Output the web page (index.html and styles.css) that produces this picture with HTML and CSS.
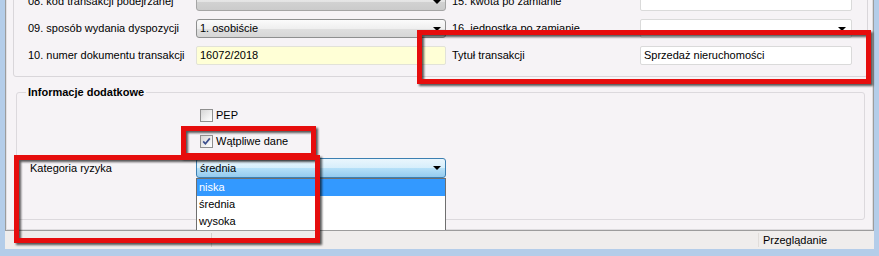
FILE: index.html
```html
<!DOCTYPE html>
<html>
<head>
	<meta charset="utf-8">
	<title>Transakcja</title>
	<link rel="stylesheet" href="styles.css">
</head>
<body>

<div class="screen">
	<div class="window">
		<div class="client">
			<div class="panel-top">
				<span class="lbl">08. kod transakcji podejrzanej</span>
				<span class="combo combo-off"><span class="arrow"></span></span>
				<span class="lbl lbl-r">15. kwota po zamianie</span>
				<span class="field"></span>

				<span class="lbl">09. sposób wydania dyspozycji</span>
				<span class="combo combo-gray">1. osobiście<span class="arrow"></span></span>
				<span class="lbl lbl-r">16. jednostka po zamianie</span>
				<span class="field field-combo"><span class="arrow"></span></span>

				<span class="lbl">10. numer dokumentu transakcji</span>
				<span class="field field-yellow">16072/2018</span>
				<span class="lbl lbl-r">Tytuł transakcji</span>
				<span class="field">Sprzedaż nieruchomości</span>
			</div>

			<fieldset class="extra">
				<legend>Informacje dodatkowe</legend>
				<label class="check"><span class="box"></span>PEP</label>
				<label class="check check-2"><span class="box"><svg width="11" height="11" viewBox="0 0 11 11"><path d="M2.2 5.4 L4.4 7.8 L8.8 2.4" fill="none" stroke="#3a4d8c" stroke-width="1.7"/></svg></span>Wątpliwe dane</label>
				<div class="risk">
					<span class="lbl risk-lbl">Kategoria ryzyka</span>
					<div class="combo combo-blue">średnia<span class="arrow"></span>
						<ul class="dropdown">
							<li class="sel">niska</li>
							<li>średnia</li>
							<li>wysoka</li>
						</ul>
					</div>
				</div>
			</fieldset>
		</div>
		<div class="status">
			<span class="st-cell st-first"></span>
			<span class="st-cell st-mid"></span>
			<span class="st-cell st-last">Przeglądanie<span class="grip"></span></span>
		</div>
	</div>

	<div class="mark mark-title"></div>
	<div class="mark mark-check"></div>
	<div class="mark mark-risk"></div>
</div>

</body>
</html>
```

FILE: styles.css
```css
html, body {
	margin: 0;
	padding: 0;
}
body {
	font-family: "Liberation Sans", Arial, sans-serif;
	font-size: 11px;
	line-height: 13px;
	color: #000;
}
.screen {
	position: relative;
	width: 879px;
	height: 256px;
	overflow: hidden;
	background: #b4cde9;
}
.window {
	display: flex;
	flex-direction: column;
	height: 249px;
	margin: 0 5px;
	background: #f6f3f6;
}
.client {
	flex: 1;
	overflow: hidden;
	border-style: solid;
	border-width: 0 1px 1px 1px;
	border-color: #9c9c9c;
	box-shadow: inset 1px 0 0 #e2e0e3, inset -1px -1px 0 #dedcdf;
}
.panel-top {
	display: grid;
	grid-template-columns: 168px 250px 194px 212px;
	grid-auto-rows: 19px;
	row-gap: 8px;
	align-items: center;
	margin: -20px 5px 0 7px;
	padding: 11px 0 11px 14px;
	border: 1px solid #d9d6da;
	border-radius: 3px;
}
.lbl {
	white-space: nowrap;
}
.lbl-r {
	padding-left: 6px;
}
.combo {
	position: relative;
	display: flex;
	align-items: center;
	box-sizing: border-box;
	height: 19px;
	padding: 0 4px 0 3px;
	border: 1px solid #8e8f8f;
	border-radius: 3px;
}
.combo .arrow {
	margin-left: auto;
}
.arrow {
	width: 0;
	height: 0;
	border-left: 4px solid transparent;
	border-right: 4px solid transparent;
	border-top: 4px solid #000;
}
.combo-off {
	background: linear-gradient(#f0f0f0, #e4e4e4 50%, #d2d2d2 51%, #cbcbcb);
	border-color: #a5a5a5;
}
.combo-gray {
	background: linear-gradient(#fbfbfb, #efefef 50%, #e0e0e0 51%, #d6d6d6);
}
.combo-blue {
	height: 20px;
	border-color: #3c7fb1;
	background: linear-gradient(#eaf6fd, #d6eefb 50%, #b6e0f8 51%, #94cbef);
}
.field {
	display: flex;
	align-items: center;
	box-sizing: border-box;
	height: 19px;
	padding: 0 3px;
	background: #fff;
	border: 1px solid #dadada;
	border-radius: 2px;
}
.field-combo .arrow {
	margin-left: auto;
	margin-right: 2px;
}
.field-yellow {
	background: #ffffd6;
	border-color: #e2e2d8;
}
.extra {
	box-sizing: border-box;
	height: 134px;
	margin: 9px 8px 0 10px;
	padding: 0;
	border: 1px solid #dcd9dd;
	border-radius: 3px;
}
.extra legend {
	margin-left: 9px;
	padding: 0 2px;
	font-weight: bold;
	line-height: 13px;
}
.check {
	display: flex;
	align-items: center;
	height: 13px;
	margin: 10px 0 0 183px;
}
.check-2 {
	margin-top: 13px;
}
.box {
	display: flex;
	align-items: center;
	justify-content: center;
	box-sizing: border-box;
	width: 13px;
	height: 13px;
	margin-right: 3px;
	border: 1px solid #8f8f8f;
	background: linear-gradient(135deg, #d6d6d6, #f4f4f4 70%, #fff);
}
.risk {
	display: flex;
	align-items: center;
	margin-top: 10px;
	padding-left: 13px;
}
.risk-lbl {
	width: 166px;
}
.risk .combo {
	width: 250px;
}
.dropdown {
	position: absolute;
	top: 19px;
	left: -1px;
	width: 250px;
	box-sizing: border-box;
	margin: 0;
	padding: 0;
	list-style: none;
	background: #fff;
	border: 1px solid #6f6f6f;
	z-index: 2;
}
.dropdown li {
	height: 17px;
	line-height: 17px;
	padding-left: 2px;
}
.dropdown li.sel {
	color: #fff;
	background: #3399ff;
}
.status {
	display: flex;
	height: 18px;
	background: #efedec;
}
.st-cell {
	display: flex;
	align-items: center;
	height: 14px;
	margin-top: 2px;
}
.st-first {
	width: 206px;
	border-right: 1px solid #d3d0cd;
}
.st-mid {
	flex: 1;
	border-right: 1px solid #e0ddda;
}
.st-last {
	position: relative;
	width: 111px;
	padding-left: 4px;
}
.grip {
	width: 6px;
	height: 6px;
	margin: 8px 1px 0 auto;
	background: radial-gradient(circle, #b9b6b2 45%, transparent 50%) 0 0 / 2px 2px;
}
.mark {
	position: absolute;
	box-sizing: border-box;
	border: 5px solid #e60d0d;
	filter: drop-shadow(2px 2px 1px rgba(0, 0, 0, .65));
	z-index: 5;
}
.mark-title {
	left: 417px;
	top: 30px;
	width: 454px;
	height: 54px;
}
.mark-check {
	left: 181px;
	top: 126px;
	width: 135px;
	height: 32px;
}
.mark-risk {
	left: 14px;
	top: 155px;
	width: 306px;
	height: 88px;
}
```
